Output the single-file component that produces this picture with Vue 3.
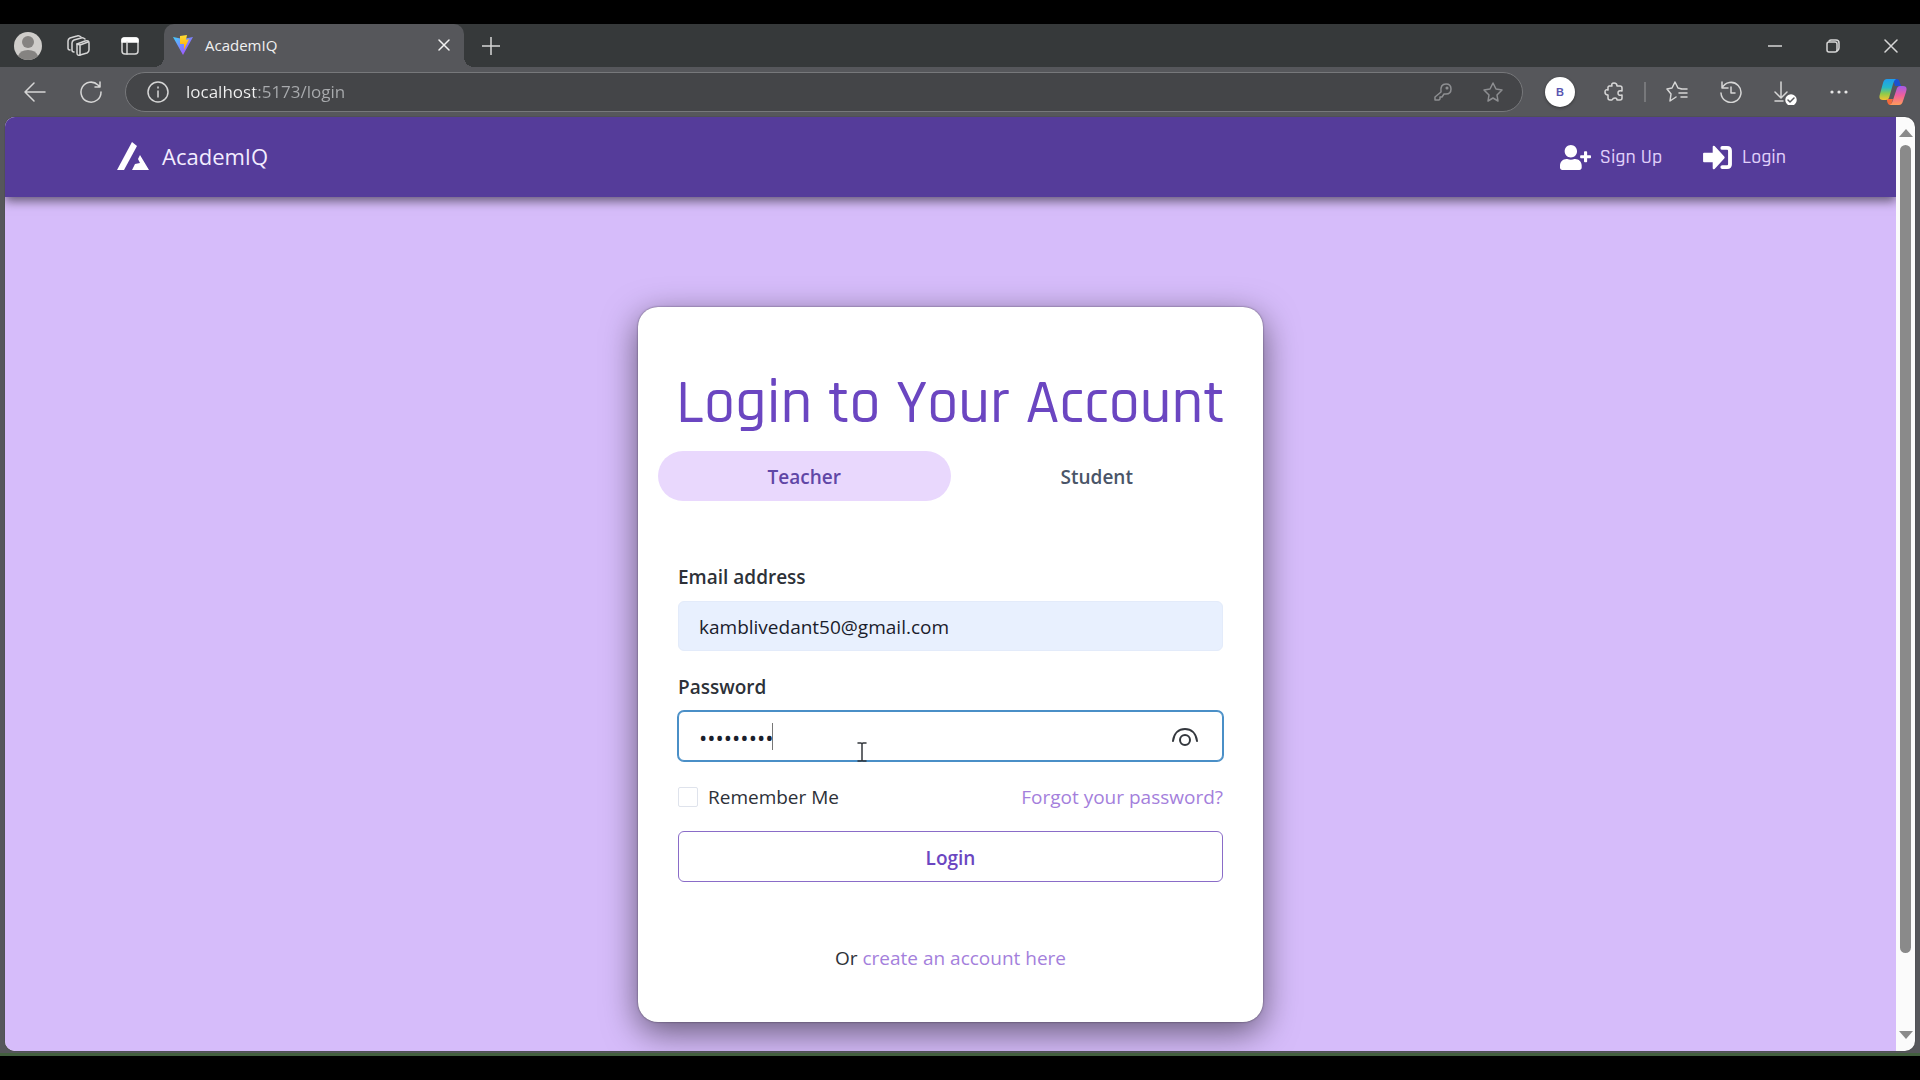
<script setup>
import { ref } from 'vue'

const address = ref('localhost:5173/login')
const role = ref('Teacher')
const roles = ['Teacher', 'Student']
const email = ref('kamblivedant50@gmail.com')
const password = ref('academiq1')
const remember = ref(false)
</script>

<template>
  <div class="window">
    <header class="tabstrip">
      <button class="strip-btn" aria-label="Profile">
        <svg width="30" height="30" viewBox="0 0 30 30">
          <circle cx="15" cy="15" r="14" fill="#cfcdca" />
          <circle cx="15" cy="11" r="6" fill="#858381" />
          <path d="M5 25q2-6 10-6t10 6q-4 4-10 4T5 25z" fill="#858381" />
        </svg>
      </button>
      <button class="strip-btn" aria-label="Workspaces">
        <svg width="24" height="24" viewBox="0 0 24 24" class="line">
          <path d="M10 10l8-3q4-1 4 2v7q0 2-2 3l-7 2q-3 1-3-2z" />
          <path d="M10 10l3 1v10M13 11l8-3" />
          <path d="M7 18q-2 0-2-2V9q0-2 2-3l7-2q2-1 4 1" />
          <path d="M3 16q-2 0-2-2V7q0-2 2-3l7-2q2-1 4 1" />
        </svg>
      </button>
      <button class="strip-btn" aria-label="Tab actions">
        <svg width="20" height="20" viewBox="0 0 20 20" class="line">
          <rect x="2" y="2" width="16" height="16" rx="3" />
          <path d="M2 5V4q0-2 2-2h12q2 0 2 2v2H2z" fill="#fff" stroke="#fff" />
          <path d="M7 6v12" />
        </svg>
      </button>
      <div class="tab">
        <svg width="20" height="20" viewBox="0 0 20 20">
          <defs>
            <linearGradient id="viteBody" x1="0" y1="0" x2="1" y2="1">
              <stop offset="0" stop-color="#41d1ff" /><stop offset="1" stop-color="#bd34fe" />
            </linearGradient>
            <linearGradient id="viteBolt" x1="0" y1="0" x2="0" y2="1">
              <stop offset="0" stop-color="#ffdd35" /><stop offset="1" stop-color="#ffa800" />
            </linearGradient>
          </defs>
          <path d="M0 2l10 2 10-2-10 18z" fill="url(#viteBody)" />
          <path d="M7 1l7-1-1 5 3-1-5 11v-6H7z" fill="url(#viteBolt)" />
        </svg>
        <span class="tab-title">AcademIQ</span>
        <button class="tab-close" aria-label="Close tab">
          <svg width="12" height="12" viewBox="0 0 12 12" class="line bright"><path d="M1 1l10 10M11 1L1 11" /></svg>
        </button>
      </div>
      <button class="strip-btn" aria-label="New tab">
        <svg width="18" height="18" viewBox="0 0 18 18" class="line"><path d="M9 0v18M0 9h18" /></svg>
      </button>
      <div class="window-controls">
        <button aria-label="Minimize">
          <svg width="14" height="14" viewBox="0 0 14 14" class="line"><path d="M0 7h14" /></svg>
        </button>
        <button aria-label="Restore">
          <svg width="14" height="14" viewBox="0 0 14 14" class="line">
            <rect x="1" y="3" width="10" height="10" rx="2" />
            <path d="M3 2q1-1 2-1h5q3 0 3 3v5q0 2-2 3" />
          </svg>
        </button>
        <button aria-label="Close">
          <svg width="14" height="14" viewBox="0 0 14 14" class="line"><path d="M1 1l12 12M13 1L1 13" /></svg>
        </button>
      </div>
    </header>

    <div class="toolbar">
      <button class="nav-btn" aria-label="Back">
        <svg width="22" height="20" viewBox="0 0 22 20" class="line"><path d="M10 1L1 10l9 9M1 10h20" /></svg>
      </button>
      <button class="nav-btn" aria-label="Refresh">
        <svg width="22" height="22" viewBox="0 0 22 22" class="line">
          <path d="M21 11a10 10 0 1 1-3-7l2 2M20 1v5h-5" />
        </svg>
      </button>
      <div class="address">
        <svg width="22" height="22" viewBox="0 0 22 22" class="line">
          <circle cx="11" cy="11" r="10" /><path d="M11 10v6M11 6v1" />
        </svg>
        <input v-model="address" class="address-text" type="text" aria-label="Address" spellcheck="false" />
        <button class="address-btn" aria-label="Saved passwords">
          <svg width="18" height="18" viewBox="0 0 18 18" class="line dim">
            <path d="M7 9Q6 1 12 1q5 0 5 5t-5 5l-2 0-2 3H6v2l-1 1H1v-3z" /><circle cx="13" cy="5" r=".8" />
          </svg>
        </button>
        <button class="address-btn" aria-label="Add to favorites">
          <svg width="22" height="22" viewBox="0 0 22 22" class="line dim">
            <path d="M11 2l3 6 6 1-5 5 1 6-5-3-5 3 1-6-5-5 6-1z" />
          </svg>
        </button>
      </div>
      <button class="tool-btn" aria-label="Extension B"><span class="badge">B</span></button>
      <button class="tool-btn" aria-label="Extensions">
        <svg width="20" height="20" viewBox="0 0 20 20" class="line">
          <path d="M5 4h3q-1-3 2-3t3 3h3q2 0 2 2v3q-4-1-4 2t4 2v3q0 2-2 2h-3q0-2-2-2t-3 2H6q-2 0-2-2v-3q-3 0-3-3t3-2V5z" />
        </svg>
      </button>
      <span class="separator"></span>
      <button class="tool-btn" aria-label="Favorites">
        <svg width="22" height="22" viewBox="0 0 22 22" class="line">
          <path d="M16 8l-4-1-3-6-3 6-5 1 4 5-1 7 6-4M15 8h6M13 12h8M15 16h6" />
        </svg>
      </button>
      <button class="tool-btn" aria-label="History">
        <svg width="22" height="22" viewBox="0 0 22 22" class="line">
          <path d="M2 1v6h6M2 7a10 10 0 1 1-1 5M11 6v6h4" />
        </svg>
      </button>
      <button class="tool-btn" aria-label="Downloads">
        <svg width="24" height="26" viewBox="0 0 24 26" class="line">
          <path d="M8 3v15M2 13l6 6 6-6M2 22h8" />
          <circle cx="18" cy="21" r="5" fill="#fff" stroke="#fff" />
          <path d="M15 21l2 2 4-4" class="tick" />
        </svg>
      </button>
      <button class="tool-btn" aria-label="Settings and more">
        <svg width="18" height="4" viewBox="0 0 18 4" fill="#e6e6e6">
          <circle cx="2" cy="2" r="1.6" /><circle cx="9" cy="2" r="1.6" /><circle cx="16" cy="2" r="1.6" />
        </svg>
      </button>
      <button class="tool-btn" aria-label="Copilot">
        <svg width="28" height="28" viewBox="0 0 28 28">
          <defs>
            <linearGradient id="copLeft" x1="0" y1="0" x2="0" y2="1">
              <stop offset="0" stop-color="#1f9bee" /><stop offset=".4" stop-color="#25b8c9" />
              <stop offset=".7" stop-color="#8fcb4a" /><stop offset="1" stop-color="#f5c331" />
            </linearGradient>
            <linearGradient id="copRight" x1="0" y1="0" x2="0" y2="1">
              <stop offset="0" stop-color="#a45be8" /><stop offset=".5" stop-color="#f0609a" />
              <stop offset="1" stop-color="#ff9c5a" />
            </linearGradient>
          </defs>
          <path d="M14 1h4q2 0 3 4l1 3h-6z" fill="#1c50d0" />
          <path d="M8 21h6l-2 6h-1q-2 0-3-4z" fill="#f26a3c" />
          <path d="M8 1h9q-2 1-3 5l-4 14q-1 2-3 2H4q-5 0-3-6L4 5q1-4 4-4z" fill="url(#copLeft)" />
          <path d="M20 27h-9q2-1 3-5l4-12q1-2 3-2h3q5 0 3 6l-3 9q-1 4-4 4z" fill="url(#copRight)" />
        </svg>
      </button>
    </div>

    <div class="viewport">
      <div class="page">
        <nav class="navbar">
          <a href="#" class="brand">
            <svg width="32" height="28" viewBox="0 0 32 28" fill="#fff">
              <path d="M0 28L15 0l5 4L7 28z" />
              <path d="M23 13l9 15H15l3-6 5-1-2-4z" />
            </svg>
            <span>AcademIQ</span>
          </a>
          <div class="nav-links">
            <a href="#signup">
              <svg width="31" height="25" viewBox="0 0 640 512" fill="#fff">
                <path d="M624 208h-64v-64c0-8.800-7.200-16-16-16h-32c-8.800 0-16 7.200-16 16v64h-64c-8.800 0-16 7.200-16 16v32c0 8.800 7.200 16 16 16h64v64c0 8.800 7.200 16 16 16h32c8.800 0 16-7.200 16-16v-64h64c8.800 0 16-7.200 16-16v-32c0-8.800-7.200-16-16-16zm-400 48c70.700 0 128-57.300 128-128S294.700 0 224 0 96 57.300 96 128s57.300 128 128 128zm89.600 32h-16.700c-22.200 10.200-46.900 16-72.900 16s-50.600-5.800-72.900-16h-16.700C60.200 288 0 348.200 0 422.400V464c0 26.500 21.500 48 48 48h352c26.500 0 48-21.500 48-48v-41.600c0-74.200-60.200-134.400-134.400-134.400z" />
              </svg>
              <span>Sign Up</span>
            </a>
            <a href="#login">
              <svg width="31" height="25" viewBox="0 0 32 26">
                <path d="M2 8h9V2q0-2 2-1l10 11q1 1 0 2L13 25q-2 1-2-1v-6H2q-1 0-1-1V9q0-1 1-1z" fill="#fff" />
                <path d="M21 3h5q3 0 3 3v14q0 3-3 3h-5" fill="none" stroke="#fff" stroke-width="4" stroke-linecap="round" />
              </svg>
              <span>Login</span>
            </a>
          </div>
        </nav>

        <main class="content">
          <section class="card">
            <h1>Login to Your Account</h1>
            <div class="roles" role="tablist">
              <button
                v-for="r in roles"
                :key="r"
                role="tab"
                :aria-selected="role === r"
                :class="['role', { active: role === r }]"
                @click="role = r"
              >{{ r }}</button>
            </div>
            <form @submit.prevent>
              <label for="email">Email address</label>
              <input id="email" v-model="email" class="field filled" type="email" />
              <label for="password">Password</label>
              <div class="password">
                <input id="password" v-model="password" class="field focused" type="password" />
                <span class="caret"></span>
                <button type="button" class="reveal" aria-label="Show password">
                  <svg width="26" height="20" viewBox="0 0 26 20">
                    <path d="M1 14C2 6 7 2 13 2s11 4 12 12" />
                    <circle cx="13" cy="13" r="5" />
                  </svg>
                </button>
                <svg class="pointer" width="10" height="20" viewBox="0 0 10 20">
                  <path d="M1 1h3l1 1 1-1h3M5 2v16M1 19h3l1-1 1 1h3" />
                </svg>
              </div>
              <div class="options">
                <label class="remember"><input v-model="remember" type="checkbox" />Remember Me</label>
                <a href="#forgot">Forgot your password?</a>
              </div>
              <button type="submit" class="submit">Login</button>
            </form>
            <p class="signup">Or <a href="#signup">create an account here</a></p>
          </section>
        </main>
      </div>
      <div class="scrollbar">
        <svg width="14" height="8" viewBox="0 0 14 8"><path d="M7 0l7 8H0z" fill="#8a8a8a" /></svg>
        <div class="track"><div class="thumb"></div></div>
        <svg width="14" height="8" viewBox="0 0 14 8"><path d="M7 8L0 0h14z" fill="#8a8a8a" /></svg>
      </div>
    </div>
  </div>
</template>

<style>
body {
  margin: 0;
  background: #000;
}
</style>

<style scoped>
* {
  box-sizing: border-box;
}
.window {
  display: flex;
  flex-direction: column;
  min-height: 100vh;
  border: solid #000;
  border-width: 24px 0;
  background: #56575b;
  font: 19px/28px "Segoe UI", "Open Sans", "Noto Sans", sans-serif;
  color: #2d3138;
}
button {
  padding: 0;
  border: 0;
  background: none;
  font: inherit;
  color: inherit;
  cursor: pointer;
}
a {
  color: #a47fdc;
  text-decoration: none;
}
svg {
  display: block;
  flex: none;
}
.line {
  fill: none;
  stroke: #d6d6d6;
  stroke-width: 1.5;
  stroke-linecap: round;
  stroke-linejoin: round;
}
.line.bright {
  stroke: #f2f2f2;
}
.line.dim {
  stroke: #8d8e91;
}
.tick {
  stroke: #56575b;
}

.tabstrip {
  display: flex;
  height: 43px;
  padding-left: 2px;
  background: #36393a;
}
.strip-btn,
.nav-btn,
.tool-btn,
.window-controls button,
.address-btn {
  display: flex;
  align-items: center;
  justify-content: center;
}
.strip-btn {
  width: 51px;
}
.tab {
  position: relative;
  display: flex;
  align-items: center;
  gap: 12px;
  width: 300px;
  margin: 0 1px 0 9px;
  padding: 0 14px 2px 9px;
  border-radius: 10px 10px 0 0;
  background: #56575b;
  color: #f0f0f0;
  font-size: 15px;
}
.tab::before,
.tab::after {
  content: "";
  position: absolute;
  bottom: 0;
  width: 10px;
  height: 10px;
}
.tab::before {
  right: 100%;
  background: radial-gradient(circle at 0 0, #36393a 10px, #56575b 10px);
}
.tab::after {
  left: 100%;
  background: radial-gradient(circle at 100% 0, #36393a 10px, #56575b 10px);
}
.tab-title {
  flex: 1;
}
.window-controls {
  display: flex;
  margin-left: auto;
}
.window-controls button {
  width: 58px;
}

.toolbar {
  display: flex;
  align-items: center;
  height: 50px;
  padding-left: 7px;
}
.nav-btn {
  width: 56px;
  height: 40px;
}
.tool-btn {
  width: 54px;
  height: 40px;
}
.address {
  display: flex;
  flex: 1;
  align-items: center;
  height: 40px;
  margin: 0 10px 0 6px;
  padding: 0 16px 0 21px;
  border: 1px solid #77787b;
  border-radius: 20px;
  background: #444548;
}
.address-text {
  flex: 1;
  min-width: 0;
  padding: 0;
  margin-left: 17px;
  border: 0;
  outline: 0;
  background: linear-gradient(90deg, #f2f2f2 69px, #a9abae 69px);
  background-clip: text;
  -webkit-text-fill-color: transparent;
  font: 17px/28px "Segoe UI", "Open Sans", "Noto Sans", sans-serif;
}
.address-btn {
  width: 50px;
  height: 36px;
}
.address-btn:last-child {
  width: 22px;
  margin: 0 2px 0 14px;
}
.badge {
  width: 30px;
  height: 30px;
  border-radius: 50%;
  background: #fff;
  box-shadow: 0 1px 3px #0006;
  color: #5a56b0;
  font: 600 11px/30px "Liberation Sans", sans-serif;
}
.separator {
  width: 2px;
  height: 20px;
  margin: 0 4px 0 3px;
  background: #77787b;
}

.viewport {
  display: flex;
  flex: 1;
  margin: 0 5px 5px;
  border-radius: 10px;
  overflow: hidden;
  background: #fbfbfb;
  box-shadow: 0 0 1px #222;
}
.window::after {
  content: "";
  height: 3px;
  margin-top: -3px;
  background: #43603f;
}
.page {
  display: flex;
  flex: 1;
  flex-direction: column;
  overflow: hidden;
  background: #d6bcfa;
}
.navbar {
  display: flex;
  align-items: center;
  justify-content: space-between;
  height: 80px;
  padding: 0 110px 0 112px;
  background: #553c9a;
  box-shadow: 0 4px 10px #0008;
}
.brand {
  display: flex;
  align-items: center;
  gap: 13px;
  padding-bottom: 2px;
  color: #f3ecff;
  font-size: 22px;
}
.nav-links {
  display: flex;
  gap: 40px;
}
.nav-links a {
  display: flex;
  align-items: center;
  gap: 9px;
  color: #e0d0fa;
  font: 500 20px/28px Rajdhani, Roboto, sans-serif;
}
.content {
  display: flex;
  flex: 1;
  align-items: flex-start;
  justify-content: center;
  padding: 110px 24px 28px;
}
.card {
  width: 625px;
  padding: 66px 20px 50px;
  border-radius: 20px;
  background: #fff;
  box-shadow: 0 10px 34px #0008, 0 0 2px #0008;
}
h1 {
  margin: 0 0 16px;
  color: #6b46c1;
  font: 500 62px/62px Rajdhani, Roboto, sans-serif;
  text-align: center;
  white-space: nowrap;
}
.roles {
  display: flex;
  margin-bottom: 62px;
}
.role {
  flex: 1;
  height: 50px;
  padding-top: 2px;
  border-radius: 25px;
  color: #4a5568;
  font-weight: 600;
}
.role.active {
  background: #e9d8fd;
  color: #6046a6;
}
form {
  display: flex;
  flex-direction: column;
  padding: 0 20px;
}
form > label {
  margin-bottom: 10px;
  font-weight: 600;
}
.field {
  width: 100%;
  height: 50px;
  padding: 2px 20px 0;
  border: 1px solid #e2e8f0;
  border-radius: 6px;
  outline: 0;
  background: #fff;
  color: #1a202c;
  font: inherit;
}
.filled {
  margin-bottom: 22px;
  border-color: #e3ebfa;
  background: #e8f0fe;
}
.password {
  position: relative;
  margin-bottom: 22px;
}
.focused {
  display: block;
  border-color: #4a8fc7;
  box-shadow: 0 0 0 1px #4a8fc7;
  font-size: 22px;
}
.caret {
  position: absolute;
  left: 94px;
  top: 12px;
  width: 1px;
  height: 27px;
  background: #777;
}
.reveal {
  position: absolute;
  right: 25px;
  top: 16px;
}
.reveal path,
.reveal circle,
.pointer path {
  fill: none;
  stroke: #33373d;
  stroke-width: 2;
  stroke-linecap: round;
}
.pointer {
  position: absolute;
  left: 179px;
  top: 31px;
}
.pointer path {
  stroke-width: 1.5;
}
.options {
  display: flex;
  justify-content: space-between;
  margin-bottom: 20px;
}
.remember {
  display: flex;
  align-items: center;
  gap: 10px;
}
.remember input {
  appearance: none;
  width: 20px;
  height: 20px;
  margin: 0;
  border: 1px solid #dfe3ec;
  border-radius: 2px;
  background: #fff;
}
.submit {
  height: 51px;
  padding-top: 2px;
  border: 1px solid #8a6cc8;
  border-radius: 6px;
  color: #6b46c1;
  font-weight: 600;
}
.signup {
  margin: 62px 0 0;
  text-align: center;
}
.scrollbar {
  display: flex;
  flex-direction: column;
  align-items: center;
  gap: 8px;
  width: 19px;
  padding: 12px 0;
}
.track {
  flex: 1;
  width: 11px;
}
.thumb {
  height: 92%;
  border-radius: 6px;
  background: #8a8a8a;
}
</style>
